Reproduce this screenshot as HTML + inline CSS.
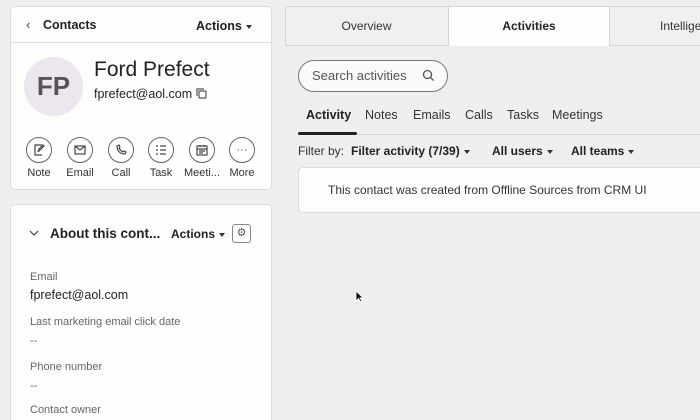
<!DOCTYPE html><html><head><style>
*{box-sizing:border-box;margin:0;padding:0}
html,body{width:700px;height:420px;overflow:hidden}
body{background:#efefef;font-family:"Liberation Sans",sans-serif;color:#222;position:relative}
.a{position:absolute;white-space:nowrap}
.card{position:absolute;background:#fdfdfc;border:1px solid #dcdcdc;border-radius:5px}
.c{position:absolute;width:26px;height:26px;border:1px solid #666;border-radius:50%;background:#fff;display:flex;align-items:center;justify-content:center}
.lbl{position:absolute;font-size:11px;color:#333;width:50px;text-align:center}
.tri{display:inline-block;border-left:3.5px solid transparent;border-right:3.5px solid transparent;border-top:4px solid #333;vertical-align:middle;margin-left:4px}
.f{font-size:11px;color:#666}
.v{font-size:12.5px;color:#222}
</style></head><body>
<div class="card" style="left:10px;top:6px;width:262px;height:184px"></div>
<div class="a" style="left:26px;top:17px;font-size:13px;color:#444">&#8249;</div>
<div class="a" style="left:43px;top:18px;font-size:12.5px;font-weight:bold">Contacts</div>
<div class="a" style="left:196px;top:19px;font-size:12.5px;font-weight:bold">Actions<span class="tri"></span></div>
<div class="a" style="left:11px;top:42px;width:260px;height:1px;background:#ddd"></div>
<div class="a" style="left:24px;top:57px;width:59px;height:59px;border-radius:50%;background:#ece6ee;font-size:26px;font-weight:bold;color:#555;text-align:center;line-height:59px">FP</div>
<div class="a" style="left:94px;top:58px;font-size:21px;color:#222">Ford Prefect</div>
<div class="a" style="left:94px;top:87px;font-size:12.5px">fprefect@aol.com</div>
<svg class="a" style="left:196px;top:88px" width="11" height="11" viewBox="0 0 11 11" fill="none" stroke="#555" stroke-width="1.2"><rect x="3" y="3" width="7" height="7" rx="1"/><path d="M1 8V1h7"/></svg>
<div class="c" style="left:26px;top:137px"><svg width="12" height="12" viewBox="0 0 12 12" fill="none" stroke="#444" stroke-width="1.2"><path d="M9 1H2v10h7M5 8l1-3 4-4 1 1-4 4z"/></svg></div>
<div class="c" style="left:67px;top:137px"><svg width="12" height="10" viewBox="0 0 12 10" fill="none" stroke="#444" stroke-width="1.2"><rect x="1" y="1" width="10" height="8"/><path d="M1 1l5 4 5-4"/></svg></div>
<div class="c" style="left:108px;top:137px"><svg width="12" height="12" viewBox="0 0 12 12" fill="none" stroke="#444" stroke-width="1.2"><path d="M2 2c0 5 3 8 8 8l1-2-2-1-1 1c-2-1-3-2-4-4l1-1-1-2z"/></svg></div>
<div class="c" style="left:148px;top:137px"><svg width="12" height="12" viewBox="0 0 12 12" fill="none" stroke="#444" stroke-width="1.2"><path d="M1 2h2M1 6h2M1 10h2M5 2h6M5 6h6M5 10h6"/></svg></div>
<div class="c" style="left:189px;top:137px"><svg width="12" height="12" viewBox="0 0 12 12" fill="none" stroke="#444" stroke-width="1.2"><rect x="1" y="2" width="10" height="9"/><path d="M1 5h10M4 1v2M8 1v2M3 7h6M3 9h4"/></svg></div>
<div class="c" style="left:229px;top:137px;font-size:11px;color:#444">&middot;&middot;&middot;</div>
<div class="lbl" style="left:14px;top:167px">Note</div>
<div class="lbl" style="left:55px;top:167px">Email</div>
<div class="lbl" style="left:96px;top:167px">Call</div>
<div class="lbl" style="left:136px;top:167px">Task</div>
<div class="lbl" style="left:177px;top:167px">Meeti...</div>
<div class="lbl" style="left:217px;top:167px">More</div>

<div class="card" style="left:10px;top:204px;width:262px;height:216px;border-bottom:none;border-radius:5px 5px 0 0"></div>
<svg class="a" style="left:29px;top:230px" width="10" height="6" viewBox="0 0 10 6" fill="none" stroke="#444" stroke-width="1.2"><path d="M1 1l4 4 4-4"/></svg>
<div class="a" style="left:50px;top:226px;font-size:13.5px;font-weight:bold">About this cont...</div>
<div class="a" style="left:171px;top:227px;font-size:12px;font-weight:bold">Actions<span class="tri"></span></div>
<div class="a" style="left:232px;top:224px;width:19px;height:19px;border:1px solid #888;border-radius:3px;font-size:11px;text-align:center;line-height:17px;color:#555">&#9881;</div>
<div class="a f" style="left:30px;top:271px">Email</div>
<div class="a v" style="left:30px;top:288px">fprefect@aol.com</div>
<div class="a f" style="left:30px;top:316px">Last marketing email click date</div>
<div class="a f" style="left:30px;top:335px">--</div>
<div class="a f" style="left:30px;top:361px">Phone number</div>
<div class="a f" style="left:30px;top:380px">--</div>
<div class="a f" style="left:30px;top:404px">Contact owner</div>

<div class="a" style="left:285px;top:6px;width:415px;height:40px;border:1px solid #d6d6d6;border-right:none;background:#f0f0f0"></div>
<div class="a" style="left:448px;top:6px;width:162px;height:40px;background:#fdfdfc;border-left:1px solid #d6d6d6;border-right:1px solid #d6d6d6;border-top:1px solid #d6d6d6"></div>
<div class="a" style="left:285px;top:19px;width:163px;text-align:center;font-size:12px;color:#333">Overview</div>
<div class="a" style="left:448px;top:19px;width:162px;text-align:center;font-size:12px;font-weight:bold">Activities</div>
<div class="a" style="left:660px;top:19px;font-size:12px;color:#333">Intellige</div>
<div class="a" style="left:298px;top:60px;width:150px;height:32px;border:1px solid #777;border-radius:16px;background:#fafafa"></div>
<div class="a" style="left:312px;top:68px;font-size:13px;color:#555">Search activities</div>
<svg class="a" style="left:422px;top:69px" width="13" height="13" viewBox="0 0 13 13" fill="none" stroke="#555" stroke-width="1.3"><circle cx="5.5" cy="5.5" r="4"/><path d="M8.5 8.5l3 3"/></svg>
<div class="a" style="left:306px;top:108px;font-size:12.5px;font-weight:bold">Activity</div>
<div class="a" style="left:365px;top:108px;font-size:12.5px;color:#333">Notes</div>
<div class="a" style="left:413px;top:108px;font-size:12.5px;color:#333">Emails</div>
<div class="a" style="left:465px;top:108px;font-size:12.5px;color:#333">Calls</div>
<div class="a" style="left:507px;top:108px;font-size:12.5px;color:#333">Tasks</div>
<div class="a" style="left:552px;top:108px;font-size:12.5px;color:#333">Meetings</div>
<div class="a" style="left:298px;top:134px;width:402px;height:1px;background:#d8d8d8"></div>
<div class="a" style="left:298px;top:132px;width:59px;height:3px;background:#222;border-radius:2px"></div>
<div class="a" style="left:298px;top:144px;font-size:12px;color:#333">Filter by:</div>
<div class="a" style="left:351px;top:144px;font-size:12px;font-weight:bold">Filter activity (7/39)<span class="tri"></span></div>
<div class="a" style="left:492px;top:144px;font-size:12px;font-weight:bold">All users<span class="tri"></span></div>
<div class="a" style="left:571px;top:144px;font-size:12px;font-weight:bold">All teams<span class="tri"></span></div>
<div class="card" style="left:298px;top:167px;width:402px;height:46px;border-right:none;border-radius:5px 0 0 5px"></div>
<div class="a" style="left:328px;top:183px;font-size:12px;color:#333">This contact was created from Offline Sources from CRM UI</div>
<svg class="a" style="left:355px;top:290px" width="9" height="13" viewBox="0 0 9 13"><path d="M1 1v10l2.5-2.5 2 3.5 1.5-.8-2-3.3H8z" fill="#111" stroke="#fff" stroke-width=".8"/></svg>
</body></html>
